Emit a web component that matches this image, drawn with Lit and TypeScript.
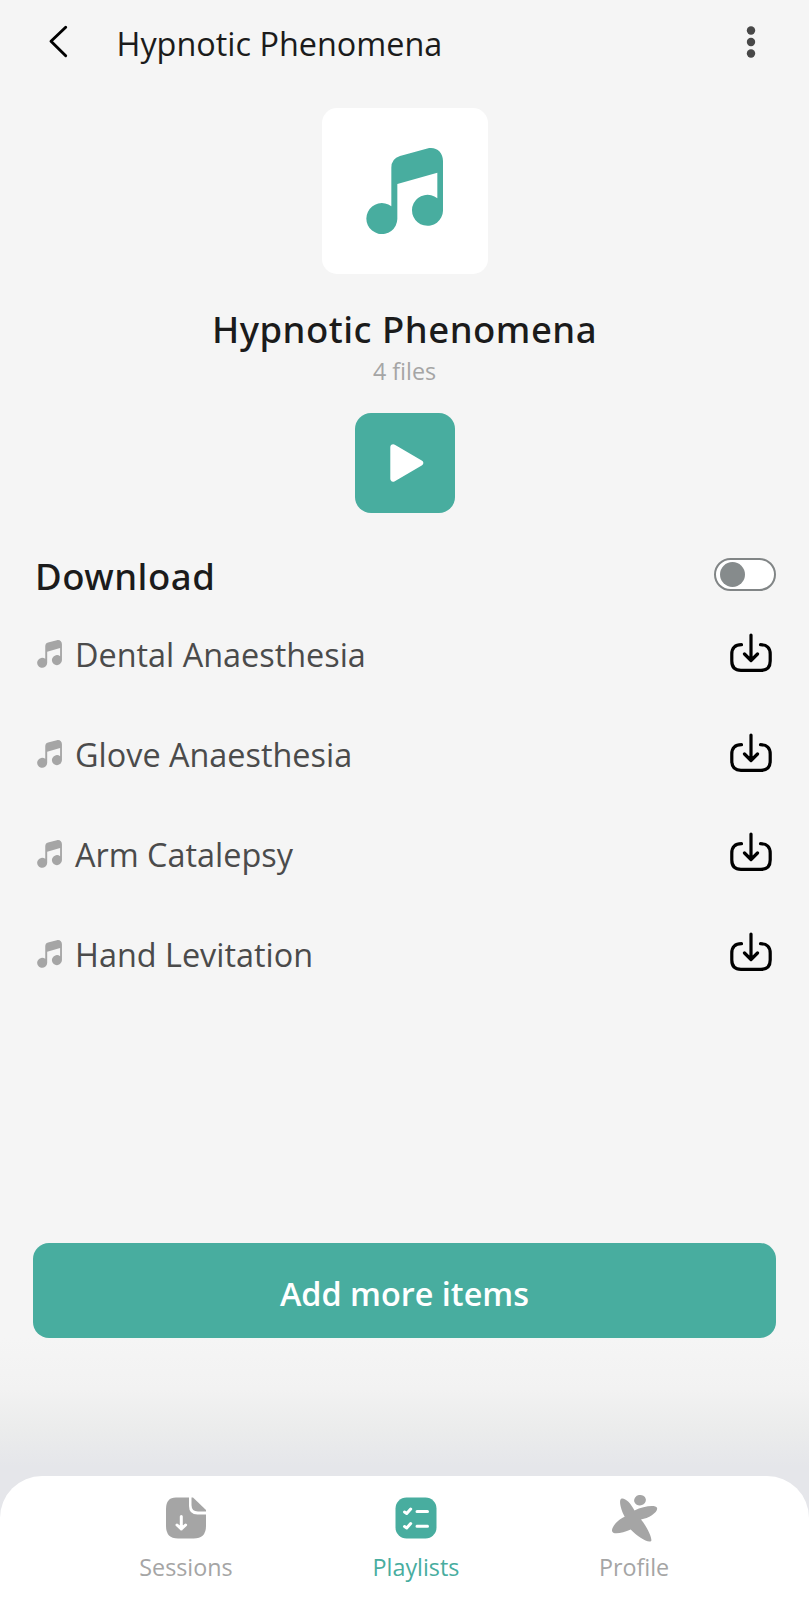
import { LitElement, html, css, svg } from "lit";
import { customElement } from "lit/decorators.js";

const note = html`<svg class="note" viewBox="168 143 231 260" fill="currentColor">
  <path d="M244 318V202Q244 175 270 167L352 144.500C378 138 399 155 399 182V331A46.500 46.500 0 1 1 382 294V217L262 251V356A46.500 46.500 0 1 1 244 318Z" />
</svg>`;

const tabIcons = {
  sessions: svg`<svg class="tab-icon" viewBox="0 0 48 48">
    <path fill="currentColor" d="M14 3.500H27V12Q27 20.500 35.500 20.500H44V32Q44 44.500 31.500 44.500H16Q4 44.500 4 32V15Q4 3.500 14 3.500Z"/>
    <path fill="currentColor" d="M29.500 3.500H31L44 16V17.500H36Q29.500 17.500 29.500 11Z"/>
    <path fill="none" stroke="#fff" stroke-width="3" stroke-linecap="round" stroke-linejoin="round" d="M19.300 22.500V35M15 31L19.300 35L23.600 31"/>
  </svg>`,
  playlists: svg`<svg class="tab-icon" viewBox="0 0 48 48">
    <rect x="3.500" y="3.500" width="41" height="41" rx="11" fill="currentColor"/>
    <g fill="none" stroke="#fff" stroke-width="3" stroke-linecap="round" stroke-linejoin="round">
      <path d="M12.500 18L14.700 19.500L18.700 15M12.500 32.500L14.700 34L18.700 29.500M25 17.500H35.500M25 32.300H35.500"/>
    </g>
  </svg>`,
  profile: svg`<svg class="tab-icon" viewBox="0 0 48 48">
    <g fill="currentColor">
      <ellipse cx="30" cy="6.200" rx="5.900" ry="5.200" transform="rotate(-12 30 6.200)"/>
      <path d="M11.200 4.700C14.500 3.200 20.500 8.500 24.500 16.400C33 12.300 45.500 10.300 47 13.800C48.500 17.800 39 24.200 31 25.400C36.500 32 42.500 44.300 41.200 47C38 49.500 27.500 42.500 20.700 35.500C13 39 3.500 41 2.200 37.500C.700 34 7.500 25.500 14.700 22.700C11 16 8.500 6.500 11.200 4.700Z"/>
    </g>
  </svg>`,
};

@customElement("app-root")
export class AppRoot extends LitElement {
  static styles = css`
    :host {
      display: flex;
      flex-direction: column;
      height: 1600px;
      box-sizing: border-box;
      overflow: hidden;
      background: #f5f5f5;
      font-family: "Open Sans", "Noto Sans", sans-serif;
      color: #1b1b1b;
    }
    svg { display: block; flex: none; }
    button { border: 0; padding: 0; background: none; font: inherit; color: inherit; }
    header { display: flex; height: 84px; padding: 0 45px 0 46px; }
    .back { width: 24px; height: 34px; margin-top: 24px; }
    .bar-title { flex: 1; margin: 0 0 0 46.500px; font-size: 32.400px; line-height: 87px; white-space: nowrap; }
    .dots { width: 24px; height: 34px; margin-top: 24.500px; }
    .hero { display: flex; flex-direction: column; align-items: center; padding-top: 24px; }
    .cover { display: grid; place-items: center; width: 166px; height: 166px; border-radius: 15px; background: #fff; color: #48ad9f; }
    .cover .note { width: 77px; height: 86.700px; margin-top: 1px; }
    h1, h2 { font-family: "Noto Sans", "Open Sans", sans-serif; font-size: 36.500px; font-weight: 500; line-height: 50px; letter-spacing: 0.500px; white-space: nowrap; }
    h1 { margin: 30px 0 0; }
    .count { margin: 0; font-size: 23.300px; line-height: 34px; color: #a5a5a5; }
    .play { width: 100px; height: 100px; margin-top: 25px; border-radius: 16px; background: #48ad9f; }
    .download { display: flex; justify-content: space-between; align-items: center; height: 50px; margin-top: 36px; padding: 0 33px 0 35px; }
    h2 { margin: 0; padding-top: 3px; }
    .switch { box-sizing: border-box; width: 62px; height: 33px; padding: 2px 4px; border: 2px solid #818586; border-radius: 17px; background: #fff; display: flex; align-items: center; }
    .knob { width: 25px; height: 25px; border-radius: 50%; background: #868b8c; }
    ul { list-style: none; margin: 4px 0 0; padding: 0 35px 0 37px; }
    li { display: flex; align-items: center; height: 99.800px; color: #4b4b4b; font-size: 32.400px; }
    li .note { width: 25px; height: 28px; color: #a5a5a5; margin-top: 3px; }
    .name { flex: 1; margin-left: 13px; padding-top: 3px; white-space: nowrap; }
    .get { width: 46px; height: 46px; color: #000; }
    .add { display: block; height: 95px; margin: 241.300px 33px 0; padding-top: 5px; border-radius: 16px; background: #48ad9f; color: #fff; font-size: 32.400px; font-weight: 600; text-align: center; }
    .shade { flex: 1; margin-bottom: -45px; background: linear-gradient(#f5f5f5 0%, #f2f2f2 28%, #ebecec 50%, #e5e6ea 70%, #e5e6ea 100%); }
    nav { position: relative; display: grid; grid-template-columns: 240px 220px 216px; justify-content: start; height: 124px; padding-left: 66px; box-sizing: border-box; border-radius: 42px 42px 0 0; background: #fff; }
    .tab { display: flex; flex-direction: column; align-items: center; padding-top: 17.500px; color: #a5a5a5; font-size: 23.300px; line-height: 34px; }
    .tab-icon { width: 48px; height: 48px; }
    .label { margin-top: 8px; }
    .active { color: #48ad9f; }
  `;

  private files = ["Dental Anaesthesia", "Glove Anaesthesia", "Arm Catalepsy", "Hand Levitation"];

  render() {
    return html`
      <header>
        <svg class="back" viewBox="0 0 24 34" fill="none" stroke="#000" stroke-width="2.900" stroke-linecap="round" stroke-linejoin="round"><path d="M19.700 3.200L5 17.300L19.700 31.800" /></svg>
        <p class="bar-title">Hypnotic Phenomena</p>
        <svg class="dots" viewBox="0 0 24 34" fill="#484848"><circle cx="11" cy="5.500" r="4.200" /><circle cx="11" cy="17" r="4.200" /><circle cx="11" cy="28.500" r="4.200" /></svg>
      </header>
      <section class="hero">
        <div class="cover">${note}</div>
        <h1>Hypnotic Phenomena</h1>
        <p class="count">4 files</p>
        <button class="play" aria-label="Play">
          <svg viewBox="0 0 100 100" fill="#fff" stroke="#fff" stroke-width="6" stroke-linejoin="round"><path d="M38.300 34.300L65.200 50L38.300 65.700Z" /></svg>
        </button>
      </section>
      <section class="download">
        <h2>Download</h2>
        <div class="switch"><span class="knob"></span></div>
      </section>
      <ul>
        ${this.files.map((name) => html`<li>
          ${note}<span class="name">${name}</span>
          <svg class="get" viewBox="0 0 46 46" fill="none" stroke="currentColor" stroke-width="3.200" stroke-linecap="round" stroke-linejoin="round">
            <path d="M13.500 14.700C7 14.700 3.800 18 3.800 24V31C3.800 37.500 7 40.300 13 40.300H33C39 40.300 42.200 37.500 42.200 31V24C42.200 18 39 14.700 32.500 14.700M23 5V30M16.500 24L23 30.500L29.500 24" />
          </svg>
        </li>`)}
      </ul>
      <button class="add">Add more items</button>
      <div class="shade"></div>
      <nav>
        <div class="tab">${tabIcons.sessions}<span class="label">Sessions</span></div>
        <div class="tab active">${tabIcons.playlists}<span class="label">Playlists</span></div>
        <div class="tab">${tabIcons.profile}<span class="label">Profile</span></div>
      </nav>
    `;
  }
}
